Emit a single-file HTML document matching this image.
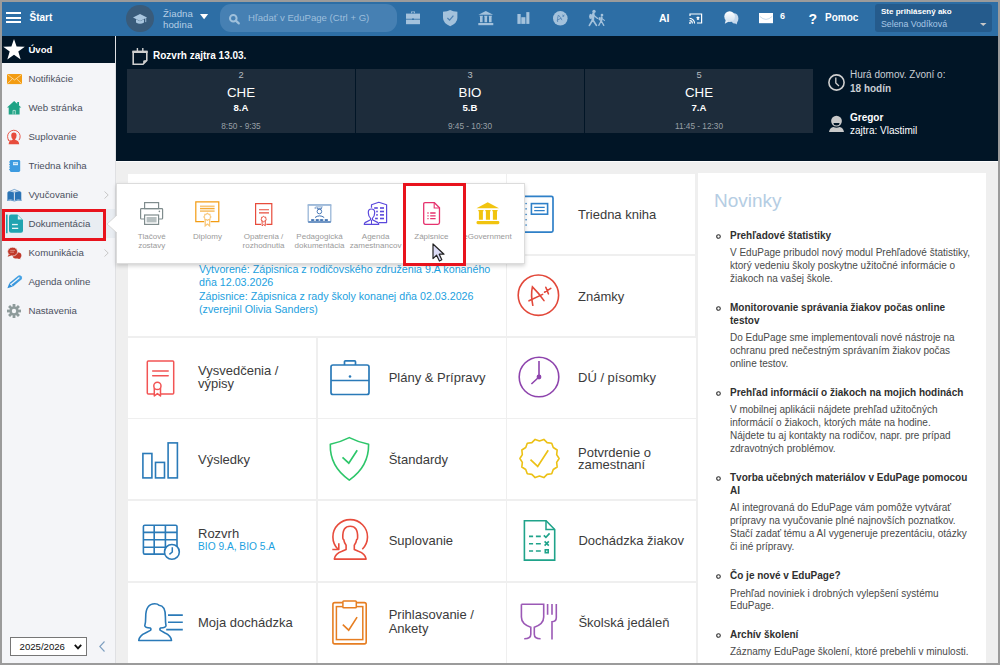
<!DOCTYPE html>
<html><head><meta charset="utf-8">
<style>
*{margin:0;padding:0;box-sizing:border-box}
html,body{width:1000px;height:665px;overflow:hidden;background:#9b9b9b;font-family:"Liberation Sans",sans-serif}
.a{position:absolute}
.t{position:absolute;line-height:1;white-space:nowrap}
svg{overflow:visible}
</style></head><body>
<div class="a" style="left:0px;top:0px;width:1000px;height:665px;background:#9b9b9b;"></div>
<div class="a" style="left:2px;top:2px;width:996px;height:34px;background:#2d6ea5;"></div>
<div class="a" style="left:6px;top:12px;width:15px;height:2px;background:#fff;"></div>
<div class="a" style="left:6px;top:16.5px;width:15px;height:2px;background:#fff;"></div>
<div class="a" style="left:6px;top:21px;width:15px;height:2px;background:#fff;"></div>
<div class="t" style="left:29.5px;top:12.54px;font-size:10px;color:#fff;font-weight:bold;">Štart</div>
<div class="a" style="left:126.2px;top:4.8px;width:27.6px;height:27.6px;background:#395b7a;border-radius:50%"></div>
<svg class="a" style="left:133.4px;top:13.8px;" width="14" height="11" viewBox="0 0 14 11"><path d="M7 0 L14 3.5 L7 7 L0 3.5Z" fill="#a9c6df"/><path d="M3 5.2 V8.5 Q7 11 11 8.5 V5.2 L7 7.3Z" fill="#a9c6df"/><rect x="12.3" y="3.6" width="0.9" height="4.5" fill="#a9c6df"/></svg>
<div class="t" style="left:163px;top:9.07px;font-size:9.6px;color:#b6cfe6;letter-spacing:0.1px;">Žiadna</div>
<div class="t" style="left:163px;top:20.07px;font-size:9.6px;color:#b6cfe6;letter-spacing:0.1px;">hodina</div>
<svg class="a" style="left:199.7px;top:14px;" width="8.2" height="5.2" viewBox="0 0 8.2 5.2"><path d="M0 0H8.2L4.1 5.2Z" fill="#fff"/></svg>
<div class="a" style="left:220px;top:4px;width:177px;height:28px;background:#4680b3;border-radius:11px"></div>
<svg class="a" style="left:228.5px;top:14px;" width="11" height="10" viewBox="0 0 11 10"><circle cx="4.3" cy="4.3" r="3.3" fill="none" stroke="#9fc0dc" stroke-width="2"/><path d="M6.8 6.6 L9.8 9.4" stroke="#9fc0dc" stroke-width="2.2" stroke-linecap="round"/></svg>
<div class="t" style="left:248px;top:13.17px;font-size:9.6px;color:#9ebfdc;">Hľadať v EduPage (Ctrl + G)</div>
<svg class="a" style="left:406px;top:11.4px;" width="14" height="13.2" viewBox="0 0 14 13.2"><path d="M5 0.5H9V2.3H8.2V1.3H5.8V2.3H5Z" fill="#a4c2dc"/><rect x="0" y="2.6" width="14" height="5.2" fill="#a4c2dc"/><rect x="0" y="8.6" width="14" height="4.6" fill="#a4c2dc"/><circle cx="7" cy="8.2" r="0.9" fill="#2d6ea5"/></svg>
<svg class="a" style="left:443px;top:9.6px;" width="14.4" height="16.2" viewBox="0 0 14.4 16.2"><path d="M7.2 0 Q10 1.8 14.4 1.8 V8 Q14.4 13 7.2 16.2 Q0 13 0 8 V1.8 Q4.4 1.8 7.2 0Z" fill="#a4c2dc"/><path d="M4.4 8 L6.6 10.2 L10.4 5.6" fill="none" stroke="#4f82b2" stroke-width="1.2"/></svg>
<svg class="a" style="left:478px;top:10.6px;" width="15.6" height="14.4" viewBox="0 0 15.6 14.4"><g fill="#a4c2dc"><path d="M7.8 0 L15.2 3.8 H0.4Z"/><path d="M1.6 4.8H5V5.6H4.6V11.2H2V5.6H1.6Z"/><path d="M6.1 4.8H9.5V5.6H9.1V11.2H6.5V5.6H6.1Z"/><path d="M10.6 4.8H14V5.6H13.6V11.2H11V5.6H10.6Z"/><rect x="0.3" y="12" width="15" height="2.2"/></g></svg>
<svg class="a" style="left:516.6px;top:12px;" width="12.6" height="12" viewBox="0 0 12.6 12"><rect x="0.4" y="2" width="3.3" height="9.9" fill="#a4c2dc"/><rect x="4.3" y="5.2" width="4.1" height="6.7" fill="#a4c2dc"/><rect x="9.3" y="0.1" width="3.1" height="11.8" fill="#a4c2dc"/></svg>
<svg class="a" style="left:552.7px;top:10.7px;" width="14.6" height="14.6" viewBox="0 0 14.6 14.6"><circle cx="7.3" cy="7.3" r="7.3" fill="#a4c2dc"/><path d="M4.6 11 Q4.2 7 5.4 4 Q7.4 6 9 9.2 M3.8 9.2 L8.4 7.2" fill="none" stroke="#5686b4" stroke-width="0.9"/><path d="M9.2 5.4 L11.6 4 M9.8 3.6 L10.8 6" stroke="#5686b4" stroke-width="0.8"/></svg>
<svg class="a" style="left:585px;top:6px;" width="25" height="24" viewBox="0 0 25 24"><g stroke="#a4c2dc" stroke-linecap="round" fill="none"><path d="M8.4 7.8 L7.8 14" stroke-width="2.6"/><path d="M7.6 14 L4.4 19.4 M7.9 14 L11.4 19.4" stroke-width="1.7"/><path d="M9 9.4 L12.6 12.4" stroke-width="1.3"/><path d="M16.6 11.2 L16.2 15" stroke-width="2.1"/><path d="M16.1 15 L13.8 19.4 M16.3 15 L18.8 19.4" stroke-width="1.3"/><path d="M17 12.6 L19.4 14.4" stroke-width="1.1"/></g><circle cx="9" cy="5.4" r="1.7" fill="#a4c2dc"/><ellipse cx="5.7" cy="10.4" rx="1.6" ry="2.6" fill="#a4c2dc"/><circle cx="17" cy="9" r="1.35" fill="#a4c2dc"/><ellipse cx="14.6" cy="12.8" rx="1.1" ry="1.8" fill="#a4c2dc"/></svg>
<div class="t" style="left:659px;top:13.11px;font-size:10.5px;color:#fff;font-weight:bold;">AI</div>
<svg class="a" style="left:689.4px;top:12.6px;" width="13.6" height="11" viewBox="0 0 13.6 11"><path d="M1 3 V1 H12.6 V10 H8" fill="none" stroke="#fff" stroke-width="1.2"/><path d="M0.6 5.4 A5 5 0 0 1 5.6 10.4 M0.6 7.6 A2.8 2.8 0 0 1 3.4 10.4" fill="none" stroke="#fff" stroke-width="1.1"/><circle cx="1" cy="10" r="0.9" fill="#fff"/><path d="M9 3.4 L11 4.4 L9 5.4 L7 4.4Z M7.8 5.2 V6.6 Q9 7.4 10.2 6.6 V5.2" fill="#fff"/></svg>
<svg class="a" style="left:723.8px;top:10.8px;" width="14.4" height="13.4" viewBox="0 0 14.4 13.4"><defs><linearGradient id="cg" x1="0" y1="0" x2="0" y2="1"><stop offset="0" stop-color="#fff"/><stop offset="1" stop-color="#cfe0ef"/></linearGradient></defs><ellipse cx="10.6" cy="7.4" rx="3.8" ry="5.2" fill="#c6d9ec"/><path d="M10.4 11.6 L12.6 13.6 L13.4 10.6Z" fill="#c6d9ec"/><ellipse cx="5.6" cy="5.6" rx="5.3" ry="5.4" fill="url(#cg)"/><path d="M1.8 9 L0.8 12.8 L4.8 10.6Z" fill="#e6eef6"/></svg>
<svg class="a" style="left:759px;top:12.6px;" width="14" height="10.2" viewBox="0 0 14 10.2"><rect x="0" y="0" width="14" height="10.2" fill="#fff"/><path d="M0.8 3.4 Q7 9.4 13.2 3.4" fill="none" stroke="#bcd3e6" stroke-width="0.8"/></svg>
<div class="t" style="left:780px;top:12.18px;font-size:9px;color:#fff;font-weight:bold;">6</div>
<div class="t" style="left:808.6px;top:11.55px;font-size:14px;color:#fff;font-weight:bold;">?</div>
<div class="t" style="left:825px;top:12.93px;font-size:10px;color:#fff;font-weight:bold;">Pomoc</div>
<div class="a" style="left:875px;top:4px;width:117px;height:28px;background:#255b8c;border-radius:3px"></div>
<div class="t" style="left:881px;top:8.23px;font-size:8px;color:#fff;font-weight:bold;">Ste prihlásený ako</div>
<div class="t" style="left:881px;top:20.05px;font-size:8.8px;color:#a9c7e6;">Selena Vodíková</div>
<svg class="a" style="left:980px;top:23px;" width="6.5" height="3" viewBox="0 0 6.5 3"><path d="M0 0H6.5L3.25 3Z" fill="#c8c8c8"/></svg>
<div class="a" style="left:2px;top:36px;width:114px;height:627px;background:#f4f5f8;"></div>
<div class="a" style="left:115px;top:36px;width:1px;height:627px;background:#dfe0e3;"></div>
<div class="a" style="left:2px;top:36px;width:113px;height:26.5px;background:#011526;"></div>
<svg class="a" style="left:3px;top:38.5px;" width="22" height="21" viewBox="0 0 22 21"><path d="M11 0 L13.6 7.6 L21.8 7.7 L15.3 12.6 L17.7 20.6 L11 15.8 L4.3 20.6 L6.7 12.6 L0.2 7.7 L8.4 7.6Z" fill="#fff"/></svg>
<div class="t" style="left:28.4px;top:44.87px;font-size:9.6px;color:#fff;font-weight:bold;">Úvod</div>
<div class="t" style="left:28.4px;top:73.79px;font-size:9.7px;color:#4b505e;">Notifikácie</div>
<div class="t" style="left:28.4px;top:102.79px;font-size:9.7px;color:#4b505e;">Web stránka</div>
<div class="t" style="left:28.4px;top:131.79px;font-size:9.7px;color:#4b505e;">Suplovanie</div>
<div class="t" style="left:28.4px;top:160.79px;font-size:9.7px;color:#4b505e;">Triedna kniha</div>
<div class="t" style="left:28.4px;top:189.79px;font-size:9.7px;color:#4b505e;">Vyučovanie</div>
<div class="a" style="left:2px;top:209px;width:113px;height:29px;background:#e9edf2;"></div>
<div class="t" style="left:28.4px;top:218.79px;font-size:9.7px;color:#4b505e;">Dokumentácia</div>
<div class="t" style="left:28.4px;top:247.79px;font-size:9.7px;color:#4b505e;">Komunikácia</div>
<div class="t" style="left:28.4px;top:276.79px;font-size:9.7px;color:#4b505e;">Agenda online</div>
<div class="t" style="left:28.4px;top:305.79px;font-size:9.7px;color:#4b505e;">Nastavenia</div>
<svg class="a" style="left:104px;top:190.5px;" width="5" height="8" viewBox="0 0 5 8"><path d="M0.5 0.5 L4.2 4 L0.5 7.5" fill="none" stroke="#c8c8c8" stroke-width="1"/></svg>
<svg class="a" style="left:104px;top:248.5px;" width="5" height="8" viewBox="0 0 5 8"><path d="M0.5 0.5 L4.2 4 L0.5 7.5" fill="none" stroke="#c8c8c8" stroke-width="1"/></svg>
<svg class="a" style="left:7px;top:73.9px;" width="15" height="10.1" viewBox="0 0 15 10.1"><rect width="15" height="10.1" fill="#f39c12"/><path d="M0.3 0.4 L7.5 6 L14.7 0.4 M0.3 9.8 L5.4 4.8 M14.7 9.8 L9.6 4.8" fill="none" stroke="#fde3b8" stroke-width="0.8"/></svg>
<svg class="a" style="left:7.4px;top:101px;" width="14.3" height="13.5" viewBox="0 0 14.3 13.5"><path d="M7.15 0 L14.3 6.6 H12.6 V13.5 H1.7 V6.6 H0Z" fill="#1fa386"/><rect x="10.2" y="1" width="1.8" height="3.5" fill="#1fa386"/><path d="M6 13.5 V9.4 H8.3 V13.5" fill="none" stroke="#c8ebe0" stroke-width="0.8"/></svg>
<svg class="a" style="left:7.4px;top:129.6px;" width="14" height="14.4" viewBox="0 0 14 14.4"><path d="M2.2 10.8 A6.3 6.3 0 1 1 12 10.2" fill="none" stroke="#e74c3c" stroke-width="0.9"/><path d="M1 9.6 L2.2 11.2 L3.8 10.2" fill="none" stroke="#e74c3c" stroke-width="0.8"/><path d="M1.6 14.2 Q2 10.6 5.2 10 L5.8 9.2 Q4.2 7.8 4.2 5.4 Q4.2 2.4 6.9 2.4 Q9.6 2.4 9.6 5.4 Q9.6 7.8 8 9.2 L8.6 10 Q11.8 10.6 12.2 14.2Z" fill="#e74c3c"/></svg>
<svg class="a" style="left:8.8px;top:160px;" width="11.2" height="12" viewBox="0 0 11.2 12"><rect x="0.8" y="0" width="10.4" height="12" rx="1.4" fill="#3d9be0"/><rect x="4" y="2.2" width="5" height="3" fill="#dff0fb"/><rect x="4.6" y="3" width="3.8" height="0.5" fill="#3d9be0"/><path d="M0 2H1.6M0 4.5H1.6M0 7H1.6M0 9.5H1.6" stroke="#3d9be0" stroke-width="0.8"/></svg>
<svg class="a" style="left:7px;top:189px;" width="14.7" height="12" viewBox="0 0 14.7 12"><path d="M7.35 0.4 L13.6 3 L1.1 3Z" fill="none" stroke="#2a73b5" stroke-width="0.6"/><path d="M0.4 3.2 Q3.8 2.2 6.9 3.6 V11.4 Q3.8 10 0.4 11Z M7.8 3.6 Q10.9 2.2 14.3 3.2 V11 Q10.9 10 7.8 11.4Z" fill="#2a73b5"/><path d="M0 11.4 Q3.8 10.6 7.35 12 Q10.9 10.6 14.7 11.4" fill="none" stroke="#2a73b5" stroke-width="0.7"/></svg>
<svg class="a" style="left:6px;top:213px;" width="17" height="22" viewBox="0 0 17 22"><rect x="0" y="1.6" width="1.6" height="18.6" fill="#20a4b0"/><path d="M5 1.5 H11.4 L17 7.1 V17.8 Q17 19.8 15 19.8 H5 Q3 19.8 3 17.8 V3.5 Q3 1.5 5 1.5Z" fill="#20a4b0"/><path d="M11.8 2.4 V6.6 H16" fill="#e9f6f7"/><rect x="6" y="10.9" width="5.8" height="1.3" fill="#e9f6f7"/><rect x="6" y="14.7" width="6.2" height="1.3" fill="#e9f6f7"/></svg>
<svg class="a" style="left:7.4px;top:246.6px;" width="14.6" height="12.4" viewBox="0 0 14.6 12.4"><ellipse cx="10" cy="8.4" rx="4.4" ry="3.2" fill="#c0392b"/><path d="M12 10.8 L14.2 12.2 L10.6 11.4Z" fill="#c0392b"/><ellipse cx="5.6" cy="4.6" rx="5" ry="4.4" fill="#c0392b" stroke="#f4f5f8" stroke-width="0.7"/><path d="M1.8 7.4 L0.6 9.8 L4.4 8.6Z" fill="#c0392b"/><path d="M3.2 3.4H8M3.2 5.2H7" stroke="#e39a90" stroke-width="0.8"/></svg>
<svg class="a" style="left:6.8px;top:275px;" width="15.5" height="13.5" viewBox="0 0 15.5 13.5"><defs><linearGradient id="pg" x1="0" y1="1" x2="1" y2="0"><stop offset="0" stop-color="#2b8ad6"/><stop offset="1" stop-color="#4aa6e6"/></linearGradient></defs><path d="M0.4 13.2 L2.4 8 L10.8 1 Q12.6 -0.4 14.4 1.2 Q16 3 14.4 4.6 L6 11.4Z" fill="url(#pg)"/><path d="M3.6 9.8 L12.4 2.4" stroke="#f4f5f8" stroke-width="1.3"/><path d="M2.6 8.4 L5.6 11.2" stroke="#f4f5f8" stroke-width="0.8"/></svg>
<svg class="a" style="left:7.4px;top:304px;" width="14" height="14" viewBox="0 0 14 14"><g fill="#8e9b9b"><circle cx="7" cy="7" r="4.6"/><rect x="5.6" y="0" width="2.8" height="14"/><rect x="0" y="5.6" width="14" height="2.8"/><rect x="5.6" y="0" width="2.8" height="14" transform="rotate(45 7 7)"/><rect x="5.6" y="0" width="2.8" height="14" transform="rotate(-45 7 7)"/></g><circle cx="7" cy="7" r="2.2" fill="#f4f5f8"/></svg>
<div class="a" style="left:10px;top:637px;width:77px;height:19px;background:#fff;border:1px solid #767676;"></div>
<div class="t" style="left:19.6px;top:642.37px;font-size:9.6px;color:#111;">2025/2026</div>
<svg class="a" style="left:74px;top:643.5px;" width="8" height="6" viewBox="0 0 8 6"><path d="M0.8 0.8 L4 4.4 L7.2 0.8" fill="none" stroke="#111" stroke-width="1.8"/></svg>
<svg class="a" style="left:98.5px;top:641px;" width="6" height="11" viewBox="0 0 6 11"><path d="M5.5 0.5 L0.8 5.5 L5.5 10.5" fill="none" stroke="#7e9fc0" stroke-width="1.1"/></svg>
<div class="a" style="left:116px;top:36px;width:882px;height:125px;background:#011526;"></div>
<svg class="a" style="left:132px;top:48px;" width="16" height="17" viewBox="0 0 16 17"><path d="M1.2 3.6 H14.8 V12.4 L11 16.2 H1.2Z" fill="none" stroke="#cfcfcf" stroke-width="1.6"/><rect x="0.4" y="2.8" width="15.2" height="2.2" fill="#cfcfcf"/><path d="M15.2 12.2 L11.2 16.6 V13.4 Q11.2 12.2 12.4 12.2Z" fill="#cfcfcf"/><path d="M5.4 0 V3 M10.8 0 V3" stroke="#cfcfcf" stroke-width="1.4"/></svg>
<div class="t" style="left:153px;top:50.73px;font-size:10px;color:#fff;font-weight:bold;">Rozvrh zajtra 13.03.</div>
<div class="a" style="left:127px;top:69px;width:228px;height:64px;background:#1d2c3b;"></div>
<div class="t" style="left:91px;width:300px;text-align:center;top:71.13px;font-size:9.3px;color:#b8bcc0;">2</div>
<div class="t" style="left:91px;width:300px;text-align:center;top:85.94px;font-size:13.3px;color:#fff;">CHE</div>
<div class="t" style="left:91px;width:300px;text-align:center;top:102.57px;font-size:9.6px;color:#fff;font-weight:bold;">8.A</div>
<div class="t" style="left:91px;width:300px;text-align:center;top:122.52px;font-size:8.25px;color:#9aa0a6;">8:50 - 9:35</div>
<div class="a" style="left:356px;top:69px;width:228px;height:64px;background:#1d2c3b;"></div>
<div class="t" style="left:320px;width:300px;text-align:center;top:71.13px;font-size:9.3px;color:#b8bcc0;">3</div>
<div class="t" style="left:320px;width:300px;text-align:center;top:85.94px;font-size:13.3px;color:#fff;">BIO</div>
<div class="t" style="left:320px;width:300px;text-align:center;top:102.57px;font-size:9.6px;color:#fff;font-weight:bold;">5.B</div>
<div class="t" style="left:320px;width:300px;text-align:center;top:122.52px;font-size:8.25px;color:#9aa0a6;">9:45 - 10:30</div>
<div class="a" style="left:585px;top:69px;width:228px;height:64px;background:#1d2c3b;"></div>
<div class="t" style="left:549px;width:300px;text-align:center;top:71.13px;font-size:9.3px;color:#b8bcc0;">5</div>
<div class="t" style="left:549px;width:300px;text-align:center;top:85.94px;font-size:13.3px;color:#fff;">CHE</div>
<div class="t" style="left:549px;width:300px;text-align:center;top:102.57px;font-size:9.6px;color:#fff;font-weight:bold;">7.A</div>
<div class="t" style="left:549px;width:300px;text-align:center;top:122.52px;font-size:8.25px;color:#9aa0a6;">11:45 - 12:30</div>
<svg class="a" style="left:828px;top:74px;" width="17" height="17" viewBox="0 0 17 17"><circle cx="8.5" cy="8.5" r="7.6" fill="none" stroke="#cfcfcf" stroke-width="1.6"/><path d="M7.8 3.6 V9 L11 12" fill="none" stroke="#cfcfcf" stroke-width="1.3"/></svg>
<div class="t" style="left:850px;top:70.13px;font-size:10px;color:#c9ced4;">Hurá domov. Zvoní o:</div>
<div class="t" style="left:850px;top:84.13px;font-size:10px;color:#c9ced4;font-weight:bold;">18 hodín</div>
<svg class="a" style="left:829px;top:115px;" width="16" height="17" viewBox="0 0 16 17"><circle cx="7.5" cy="6.1" r="5.4" fill="#c9c9c9"/><path d="M4.5 8 H10.5 Q10.5 10.5 7.5 10.5 Q4.5 10.5 4.5 8Z" fill="#011526"/><path d="M0 16.9 Q0.8 12.6 4.4 12.1 Q7.5 13.2 10.6 12.1 Q14.2 12.6 15 16.9Z" fill="#c9c9c9"/></svg>
<div class="t" style="left:850px;top:113.03px;font-size:10px;color:#fff;font-weight:bold;">Gregor</div>
<div class="t" style="left:850px;top:125.63px;font-size:10px;color:#fff;">zajtra: Vlastimil</div>
<div class="a" style="left:116px;top:161px;width:882px;height:502px;background:#efefef;"></div>
<div class="a" style="left:116px;top:161px;width:882px;height:1px;background:#fbfbfb;"></div>
<div class="a" style="left:128px;top:174px;width:377.5px;height:161.8px;background:#fff;"></div>
<div class="a" style="left:507px;top:174px;width:188px;height:80px;background:#fff;"></div>
<div class="a" style="left:507px;top:255.8px;width:188px;height:80px;background:#fff;"></div>
<div class="a" style="left:128px;top:337.6px;width:188px;height:80px;background:#fff;"></div>
<div class="a" style="left:317.5px;top:337.6px;width:188.5px;height:80px;background:#fff;"></div>
<div class="a" style="left:507px;top:337.6px;width:188.5px;height:80px;background:#fff;"></div>
<div class="a" style="left:128px;top:419.4px;width:188px;height:80px;background:#fff;"></div>
<div class="a" style="left:317.5px;top:419.4px;width:188.5px;height:80px;background:#fff;"></div>
<div class="a" style="left:507px;top:419.4px;width:188.5px;height:80px;background:#fff;"></div>
<div class="a" style="left:128px;top:501.2px;width:188px;height:80px;background:#fff;"></div>
<div class="a" style="left:317.5px;top:501.2px;width:188.5px;height:80px;background:#fff;"></div>
<div class="a" style="left:507px;top:501.2px;width:188.5px;height:80px;background:#fff;"></div>
<div class="a" style="left:128px;top:583px;width:188px;height:80px;background:#fff;"></div>
<div class="a" style="left:317.5px;top:583px;width:188.5px;height:80px;background:#fff;"></div>
<div class="a" style="left:507px;top:583px;width:188.5px;height:80px;background:#fff;"></div>
<div class="a" style="left:698px;top:173px;width:288px;height:490px;background:#fff;"></div>
<div class="t" style="left:199px;top:263.74px;font-size:10.7px;color:#1b9fe0;">Vytvorené: Zápisnica z rodičovského združenia 9.A konaného</div>
<div class="t" style="left:199px;top:276.94px;font-size:10.7px;color:#1b9fe0;">dňa 12.03.2026</div>
<div class="t" style="left:199px;top:290.94px;font-size:10.7px;color:#1b9fe0;">Zápisnice: Zápisnica z rady školy konanej dňa 02.03.2026</div>
<div class="t" style="left:199px;top:303.74px;font-size:10.7px;color:#1b9fe0;">(zverejnil Olivia Sanders)</div>
<svg class="a" style="left:515px;top:190px;" width="45" height="50" viewBox="0 0 45 50"><rect x="5" y="6.4" width="33" height="35.7" rx="1.6" fill="none" stroke="#2f80c8" stroke-width="1.7"/><rect x="16.4" y="13.6" width="16.2" height="10.6" fill="none" stroke="#2f80c8" stroke-width="1.6"/><path d="M19.2 17.3H29.7M19.2 20.7H29.7" stroke="#2f80c8" stroke-width="1.3"/><g fill="#2f80c8"><rect x="10.4" y="12.9" width="1.4" height="1.3"/><rect x="10.4" y="18.2" width="1.4" height="1.3"/><rect x="10.4" y="23.8" width="1.4" height="1.3"/><rect x="10.4" y="29.1" width="1.4" height="1.3"/><rect x="10.4" y="34.4" width="1.4" height="1.3"/></g></svg>
<div class="t" style="left:578px;top:208.00px;font-size:13px;color:#3b3b3b;">Triedna kniha</div>
<svg class="a" style="left:514px;top:270px;" width="50" height="50" viewBox="0 0 50 50"><circle cx="24.4" cy="25.2" r="20.2" fill="none" stroke="#e2483a" stroke-width="1.6"/><g fill="none" stroke="#e2483a" stroke-width="1.6" stroke-linecap="round"><path d="M18.8 35.3 Q16.6 25 18.4 16.9 Q24.6 23 30 30.6"/><path d="M15 30.8 L28.6 24.4"/><path d="M30.5 22.2 L36.8 18.4 M31.8 17.3 L34.4 23.8"/></g></svg>
<div class="t" style="left:578px;top:289.50px;font-size:13px;color:#3b3b3b;">Známky</div>
<svg class="a" style="left:145.5px;top:359.5px;" width="28" height="37" viewBox="0 0 28 37"><path d="M8 34.1 H2.3 Q1.3 34.1 1.3 33.1 V1.9 Q1.3 0.9 2.3 0.9 H26.7 Q27.7 0.9 27.7 1.9 V33.1 Q27.7 34.1 26.7 34.1 H15" fill="none" stroke="#f25454" stroke-width="1.5"/><path d="M6.7 11.1H22.2M6.7 15.8H22.2" stroke="#f25454" stroke-width="1.5" stroke-linecap="round"/><circle cx="11.4" cy="25.9" r="3.6" fill="none" stroke="#f25454" stroke-width="1.5"/><path d="M8.3 28 V36 L11.4 33.6 L14.5 36 V28" fill="none" stroke="#f25454" stroke-width="1.5" stroke-linejoin="round"/></svg>
<div class="t" style="left:198px;top:364.30px;font-size:13px;color:#3b3b3b;">Vysvedčenia /</div>
<div class="t" style="left:198px;top:376.60px;font-size:13px;color:#3b3b3b;">výpisy</div>
<svg class="a" style="left:329.5px;top:359.5px;" width="40" height="35.5" viewBox="0 0 40 35.5"><rect x="1" y="5" width="38" height="29.5" rx="2" fill="none" stroke="#2a7ab8" stroke-width="1.7"/><path d="M1 20.5H39" stroke="#2a7ab8" stroke-width="1.7"/><path d="M14.5 5V1.8 Q14.5 0.9 15.4 0.9 H24.6 Q25.5 0.9 25.5 1.8 V5" fill="none" stroke="#2a7ab8" stroke-width="1.7"/><circle cx="20" cy="16.5" r="1.3" fill="#2a7ab8"/></svg>
<div class="t" style="left:388.7px;top:370.50px;font-size:13px;color:#3b3b3b;">Plány &amp; Prípravy</div>
<svg class="a" style="left:518.2px;top:356.2px;" width="42" height="42" viewBox="0 0 42 42"><circle cx="21" cy="21" r="19.8" fill="none" stroke="#8e44ad" stroke-width="1.6"/><path d="M21 5 V21 L13.4 28" fill="none" stroke="#8e44ad" stroke-width="1.6"/><circle cx="21" cy="21" r="2.4" fill="#8e44ad"/></svg>
<div class="t" style="left:578px;top:371.00px;font-size:13px;color:#3b3b3b;">DÚ / písomky</div>
<svg class="a" style="left:136px;top:432px;" width="50" height="54" viewBox="0 0 50 54"><g fill="none" stroke="#2a7ab8" stroke-width="1.6"><rect x="6.9" y="21.5" width="9" height="24.4"/><rect x="19.5" y="30.4" width="9" height="15.5"/><rect x="32.1" y="10.9" width="9.3" height="35"/></g></svg>
<div class="t" style="left:198px;top:453.30px;font-size:13px;color:#3b3b3b;">Výsledky</div>
<svg class="a" style="left:324px;top:430px;" width="52" height="56" viewBox="0 0 52 56"><path d="M6.3 14.3 Q17 11.8 25.3 7.6 Q33.6 11.8 44.6 14.3 C44.8 30 37 42 25.3 50.1 C13.6 42 5.8 30 6.3 14.3Z" fill="none" stroke="#2dc66a" stroke-width="1.6" stroke-linejoin="round"/><path d="M18.5 27.4 L24.8 33.2 L33.2 20.2" fill="none" stroke="#2dc66a" stroke-width="1.7"/></svg>
<div class="t" style="left:388.7px;top:453.30px;font-size:13px;color:#3b3b3b;">Štandardy</div>
<svg class="a" style="left:519px;top:439.3px;" width="41" height="39.5" viewBox="0 0 41 39.5"><path d="M20.50,1.90 24.86,0.39 28.14,3.64 32.72,4.18 34.26,8.53 38.16,11.00 37.66,15.58 40.10,19.50 37.66,23.42 38.16,28.00 34.26,30.47 32.72,34.82 28.14,35.36 24.86,38.61 20.50,37.10 16.14,38.61 12.86,35.36 8.28,34.82 6.74,30.47 2.84,28.00 3.34,23.42 0.90,19.50 3.34,15.58 2.84,11.00 6.74,8.53 8.28,4.18 12.86,3.64 16.14,0.39 20.50,1.90Z" fill="none" stroke="#ecc115" stroke-width="1.6" stroke-linejoin="round"/><path d="M11.5 20.7 L18.7 27.4 L29.2 11.3" fill="none" stroke="#ecc115" stroke-width="1.7"/></svg>
<div class="t" style="left:578px;top:446.00px;font-size:13px;color:#3b3b3b;">Potvrdenie o</div>
<div class="t" style="left:578px;top:458.40px;font-size:13px;color:#3b3b3b;">zamestnaní</div>
<svg class="a" style="left:138px;top:518px;" width="48" height="48" viewBox="0 0 48 48"><g fill="none" stroke="#2a7ab8" stroke-width="1.6"><rect x="5.4" y="7.2" width="33.6" height="28.9" rx="1.4"/><path d="M5.4 14.4 H39 M5.4 21.7 H39 M5.4 29.2 H30 M16.2 7.2 V36.1 M27.4 7.2 V29"/></g><circle cx="33.9" cy="33.9" r="7.4" fill="#fff" stroke="#2a7ab8" stroke-width="1.6"/><path d="M34.3 29.2 V34 L31.4 36.3" fill="none" stroke="#2a7ab8" stroke-width="1.5"/></svg>
<div class="t" style="left:198px;top:527.40px;font-size:13px;color:#3b3b3b;">Rozvrh</div>
<div class="t" style="left:198px;top:542.07px;font-size:10.2px;color:#1b9fe0;">BIO 9.A, BIO 5.A</div>
<svg class="a" style="left:325px;top:512px;" width="50" height="54" viewBox="0 0 50 54"><g fill="none" stroke="#e74c3c" stroke-width="1.6" stroke-linejoin="round"><path d="M37.3 37.3 A17.3 17.3 0 1 0 13 37.2"/><path d="M13.8 31.3 V37.5 H7.3"/><path d="M9.3 47.1 Q10 41.6 17 39.2 L21.1 37.4 V33.2 Q19.2 30.6 18.8 27.8 Q17.6 27.2 17.8 25.6 Q17.4 14.2 25.2 14.2 Q33 14.2 32.6 25.6 Q32.8 27.2 31.6 27.8 Q31.2 30.6 29.3 33.2 V37.4 L33.4 39.2 Q40.4 41.6 41.1 47.1 Z"/></g></svg>
<div class="t" style="left:388.7px;top:534.30px;font-size:13px;color:#3b3b3b;">Suplovanie</div>
<svg class="a" style="left:516px;top:512px;" width="46" height="54" viewBox="0 0 46 54"><path d="M8.4 8.8 H30.1 L38.7 17.5 V48.1 H8.4Z" fill="none" stroke="#1fa38a" stroke-width="1.6"/><path d="M30 8.8 V17.4 H38.7" fill="none" stroke="#1fa38a" stroke-width="1.5"/><path d="M13 24.4H17.1M19.9 24.4H24.8 M13 31.7H17.1M19.9 31.7H24.8 M13 39H17.1M19.9 39H24.8" stroke="#1fa38a" stroke-width="1.6"/><path d="M27.8 23.4 L29.9 25.4 L33.6 21.4" fill="none" stroke="#1fa38a" stroke-width="1.6"/><path d="M28.6 29.4 L32.8 33.6 M32.8 29.4 L28.6 33.6" stroke="#1fa38a" stroke-width="1.6"/><rect x="29.3" y="37.8" width="2.9" height="2.9" fill="none" stroke="#1fa38a" stroke-width="1.6"/></svg>
<div class="t" style="left:578.4px;top:534.30px;font-size:13px;color:#3b3b3b;">Dochádzka žiakov</div>
<svg class="a" style="left:134px;top:596px;" width="54" height="52" viewBox="0 0 54 52"><path d="M4.7 44.5 Q5.4 39.6 11.4 37 L16.4 34.4 Q17.6 32.8 16.2 32 Q11.2 31.6 10.8 29.8 Q11.7 27 11.7 21 Q11.6 7.8 20.8 7.8 Q23.8 7.8 25 9.2 Q31.6 9.6 31.4 21 Q31.4 27 32 29.8 Q31.6 31.6 26.6 32 Q25.2 32.8 26.4 34.4 L31 37 Q37 39.6 37.5 44.5 Z" fill="none" stroke="#2a7ab8" stroke-width="1.6" stroke-linejoin="round"/><path d="M34 19.1 H48.8 M34 26.2 H48.8 M32.2 33.6 H48.8" stroke="#2a7ab8" stroke-width="1.6"/></svg>
<div class="t" style="left:198px;top:616.30px;font-size:13px;color:#3b3b3b;">Moja dochádzka</div>
<svg class="a" style="left:326px;top:594px;" width="48" height="56" viewBox="0 0 48 56"><rect x="6.9" y="8.6" width="33.3" height="41.3" rx="1.8" fill="none" stroke="#e67e22" stroke-width="1.6"/><rect x="10.4" y="12.6" width="26.4" height="33" fill="none" stroke="#e67e22" stroke-width="1.5"/><rect x="16.9" y="6.9" width="13.4" height="6.8" rx="0.8" fill="#fff" stroke="#e67e22" stroke-width="1.5"/><path d="M16.8 30.7 L22.7 36.2 L31.1 23.1" fill="none" stroke="#e67e22" stroke-width="1.6"/></svg>
<div class="t" style="left:388.7px;top:608.00px;font-size:13px;color:#3b3b3b;">Prihlasovanie /</div>
<div class="t" style="left:388.7px;top:621.60px;font-size:13px;color:#3b3b3b;">Ankety</div>
<svg class="a" style="left:514px;top:596px;" width="50" height="52" viewBox="0 0 50 52"><g fill="none" stroke="#9b59b6" stroke-width="1.6"><path d="M7.4 8.2 H29.7 V21 Q29.7 28 20.3 31.3 V38.2 Q20.3 42.8 26.6 42.8 M7.4 8.2 V21 Q7.4 28 16.8 31.3 V38.2 Q16.8 42.8 10.2 42.8"/><path d="M33.6 8 V18.8 M38 8 V18.8 M42.3 8 V21.6 Q42.3 25.6 38 25.8 V43.4"/></g></svg>
<div class="t" style="left:578.4px;top:615.80px;font-size:13px;color:#3b3b3b;">Školská jedáleň</div>
<div class="t" style="left:714px;top:191.42px;font-size:19px;color:#b5cde3;">Novinky</div>
<svg class="a" style="left:715.5px;top:233.8px;" width="5" height="5" viewBox="0 0 5 5"><circle cx="2.5" cy="2.5" r="1.8" fill="none" stroke="#2f2f2f" stroke-width="1.1"/></svg>
<div class="t" style="left:730px;top:230.53px;font-size:10px;color:#2f2f2f;font-weight:bold;">Prehľadové štatistiky</div>
<div class="t" style="left:730px;top:247.93px;font-size:10px;color:#4a4a4a;">V EduPage pribudol nový modul Prehľadové štatistiky,</div>
<div class="t" style="left:730px;top:260.88px;font-size:10px;color:#4a4a4a;">ktorý vedeniu školy poskytne užitočné informácie o</div>
<div class="t" style="left:730px;top:273.83px;font-size:10px;color:#4a4a4a;">žiakoch na vašej škole.</div>
<svg class="a" style="left:715.5px;top:305.8px;" width="5" height="5" viewBox="0 0 5 5"><circle cx="2.5" cy="2.5" r="1.8" fill="none" stroke="#2f2f2f" stroke-width="1.1"/></svg>
<div class="t" style="left:730px;top:302.54px;font-size:10px;color:#2f2f2f;font-weight:bold;">Monitorovanie správania žiakov počas online</div>
<div class="t" style="left:730px;top:315.74px;font-size:10px;color:#2f2f2f;font-weight:bold;">testov</div>
<div class="t" style="left:730px;top:333.13px;font-size:10px;color:#4a4a4a;">Do EduPage sme implementovali nové nástroje na</div>
<div class="t" style="left:730px;top:346.08px;font-size:10px;color:#4a4a4a;">ochranu pred nečestným správaním žiakov počas</div>
<div class="t" style="left:730px;top:359.03px;font-size:10px;color:#4a4a4a;">online testov.</div>
<svg class="a" style="left:715.5px;top:390.8px;" width="5" height="5" viewBox="0 0 5 5"><circle cx="2.5" cy="2.5" r="1.8" fill="none" stroke="#2f2f2f" stroke-width="1.1"/></svg>
<div class="t" style="left:730px;top:387.54px;font-size:10px;color:#2f2f2f;font-weight:bold;">Prehľad informácií o žiakoch na mojich hodinách</div>
<div class="t" style="left:730px;top:404.94px;font-size:10px;color:#4a4a4a;">V mobilnej aplikácii nájdete prehľad užitočných</div>
<div class="t" style="left:730px;top:417.88px;font-size:10px;color:#4a4a4a;">informácií o žiakoch, ktorých máte na hodine.</div>
<div class="t" style="left:730px;top:430.83px;font-size:10px;color:#4a4a4a;">Nájdete tu aj kontakty na rodičov, napr. pre prípad</div>
<div class="t" style="left:730px;top:443.78px;font-size:10px;color:#4a4a4a;">zdravotných problémov.</div>
<svg class="a" style="left:715.5px;top:476.1px;" width="5" height="5" viewBox="0 0 5 5"><circle cx="2.5" cy="2.5" r="1.8" fill="none" stroke="#2f2f2f" stroke-width="1.1"/></svg>
<div class="t" style="left:730px;top:472.84px;font-size:10px;color:#2f2f2f;font-weight:bold;">Tvorba učebných materiálov v EduPage pomocou</div>
<div class="t" style="left:730px;top:486.04px;font-size:10px;color:#2f2f2f;font-weight:bold;">AI</div>
<div class="t" style="left:730px;top:503.44px;font-size:10px;color:#4a4a4a;">AI integrovaná do EduPage vám pomôže vytvárať</div>
<div class="t" style="left:730px;top:516.38px;font-size:10px;color:#4a4a4a;">prípravy na vyučovanie plné najnovších poznatkov.</div>
<div class="t" style="left:730px;top:529.34px;font-size:10px;color:#4a4a4a;">Stačí zadať tému a AI vygeneruje prezentáciu, otázky</div>
<div class="t" style="left:730px;top:542.29px;font-size:10px;color:#4a4a4a;">či iné prípravy.</div>
<svg class="a" style="left:715.5px;top:574.4px;" width="5" height="5" viewBox="0 0 5 5"><circle cx="2.5" cy="2.5" r="1.8" fill="none" stroke="#2f2f2f" stroke-width="1.1"/></svg>
<div class="t" style="left:730px;top:571.13px;font-size:10px;color:#2f2f2f;font-weight:bold;">Čo je nové v EduPage?</div>
<div class="t" style="left:730px;top:588.54px;font-size:10px;color:#4a4a4a;">Prehľad noviniek i drobných vylepšení systému</div>
<div class="t" style="left:730px;top:601.49px;font-size:10px;color:#4a4a4a;">EduPage.</div>
<svg class="a" style="left:715.5px;top:633.1999999999999px;" width="5" height="5" viewBox="0 0 5 5"><circle cx="2.5" cy="2.5" r="1.8" fill="none" stroke="#2f2f2f" stroke-width="1.1"/></svg>
<div class="t" style="left:730px;top:629.93px;font-size:10px;color:#2f2f2f;font-weight:bold;">Archív školení</div>
<div class="t" style="left:730px;top:647.34px;font-size:10px;color:#4a4a4a;">Záznamy EduPage školení, ktoré prebehli v minulosti.</div>
<div class="a" style="left:116px;top:183px;width:408.5px;height:81px;background:#fff;border:1px solid #dcdcdc;box-shadow:0 2px 4px rgba(0,0,0,0.18);"></div>
<svg class="a" style="left:106px;top:215px;" width="11" height="18" viewBox="0 0 11 18"><path d="M11 0 L1 9 L11 18Z" fill="#fff"/><path d="M11 0 L1 9 L11 18" fill="none" stroke="#d8d8d8" stroke-width="1"/></svg>
<div class="t" style="left:1.6999999999999886px;width:300px;text-align:center;top:232.53px;font-size:8px;color:#9a9a9a;">Tlačové</div>
<div class="t" style="left:1.6999999999999886px;width:300px;text-align:center;top:242.13px;font-size:8px;color:#9a9a9a;">zostavy</div>
<div class="t" style="left:57.5px;width:300px;text-align:center;top:232.53px;font-size:8px;color:#9a9a9a;">Diplomy</div>
<div class="t" style="left:113.5px;width:300px;text-align:center;top:232.53px;font-size:8px;color:#9a9a9a;">Opatrenia /</div>
<div class="t" style="left:113.5px;width:300px;text-align:center;top:242.13px;font-size:8px;color:#9a9a9a;">rozhodnutia</div>
<div class="t" style="left:169.5px;width:300px;text-align:center;top:232.53px;font-size:8px;color:#9a9a9a;">Pedagogická</div>
<div class="t" style="left:169.5px;width:300px;text-align:center;top:242.13px;font-size:8px;color:#9a9a9a;">dokumentácia</div>
<div class="t" style="left:225.60000000000002px;width:300px;text-align:center;top:232.53px;font-size:8px;color:#9a9a9a;">Agenda</div>
<div class="t" style="left:225.60000000000002px;width:300px;text-align:center;top:242.13px;font-size:8px;color:#9a9a9a;">zamestnancov</div>
<div class="t" style="left:281.4px;width:300px;text-align:center;top:232.53px;font-size:8px;color:#9a9a9a;">Zápisnice</div>
<div class="t" style="left:337.5px;width:300px;text-align:center;top:232.53px;font-size:8px;color:#9a9a9a;">eGovernment</div>
<svg class="a" style="left:140px;top:202px;" width="23.2" height="23" viewBox="0 0 23.2 23"><g fill="none" stroke="#7f8c8d" stroke-width="1.2"><rect x="4.6" y="0.6" width="14" height="6"/><path d="M4.6 17H1.4 Q0.6 17 0.6 16.2V7.4 Q0.6 6.6 1.4 6.6H21.8 Q22.6 6.6 22.6 7.4V16.2 Q22.6 17 21.8 17H18.6"/><rect x="4.6" y="13" width="14" height="9.4"/></g><rect x="6.6" y="15" width="10" height="5.4" fill="#b6bfc0"/><circle cx="19.4" cy="9.4" r="0.8" fill="#7f8c8d"/></svg>
<svg class="a" style="left:195.2px;top:201px;" width="24.6" height="26" viewBox="0 0 24.6 26"><path d="M9.2 20.6H0.8V0.8H23.8V20.6H15.6" fill="none" stroke="#f39c12" stroke-width="1.2"/><path d="M5 5.3H19.6M5 10.1H19.6" stroke="#f8c77a" stroke-width="1.8"/><path d="M5 7.7H19.6" stroke="#f39c12" stroke-width="1.1"/><path d="M16.00,15.90 15.08,17.01 14.95,18.45 13.51,18.58 12.40,19.50 11.29,18.58 9.85,18.45 9.72,17.01 8.80,15.90 9.72,14.79 9.85,13.35 11.29,13.22 12.40,12.30 13.51,13.22 14.95,13.35 15.08,14.79Z" fill="#fff" stroke="#f8c77a" stroke-width="1.1"/><path d="M10.2 19 V24.8 L12.4 23 L14.6 24.8 V19" fill="none" stroke="#f8c77a" stroke-width="1.3"/></svg>
<svg class="a" style="left:254.8px;top:202.6px;" width="17.4" height="24" viewBox="0 0 17.4 24"><path d="M6 21.4H0.6V0.6H16.8V21.4H11.4" fill="none" stroke="#e74c3c" stroke-width="1.2"/><path d="M4 6.8H14 M4 9.9H14" stroke="#e74c3c" stroke-width="1.1"/><path d="M11.50,16.10 10.73,16.94 10.68,18.08 9.54,18.13 8.70,18.90 7.86,18.13 6.72,18.08 6.67,16.94 5.90,16.10 6.67,15.26 6.72,14.12 7.86,14.07 8.70,13.30 9.54,14.07 10.68,14.12 10.73,15.26Z" fill="#fff" stroke="#e74c3c" stroke-width="1"/><path d="M7.1 18.2 V22.8 L8.7 21.5 L10.3 22.8 V18.2" fill="none" stroke="#e74c3c" stroke-width="1"/></svg>
<svg class="a" style="left:304px;top:200px;" width="32" height="28" viewBox="0 0 32 28"><rect x="4.2" y="4.8" width="22.6" height="17.2" rx="0.8" fill="none" stroke="#9ab7d8" stroke-width="1.3"/><path d="M4.2 22 H26.8" stroke="#3a6db0" stroke-width="1.1"/><rect x="3.6" y="4.2" width="23.8" height="1.5" fill="#9ab7d8"/><rect x="11.6" y="6.3" width="7.2" height="1.1" fill="#9ab7d8"/><path d="M13.2 7.4 V8.8 H17.4 V7.4" fill="none" stroke="#3a6db0" stroke-width="0.9"/><path d="M11.2 7.2 V8.8" stroke="#3a6db0" stroke-width="0.8"/><circle cx="15.4" cy="11.5" r="2.3" fill="none" stroke="#3a6db0" stroke-width="0.9"/><path d="M11 17.5 Q15.6 14.2 20.2 17.5" fill="none" stroke="#3a6db0" stroke-width="1"/><rect x="7.2" y="19.6" width="16.6" height="0.9" fill="#9ab7d8"/><g fill="#3a6db0"><rect x="7.2" y="19.2" width="2.7" height="1.7"/><rect x="12" y="19.2" width="2.7" height="1.7"/><rect x="16.2" y="19.2" width="2.7" height="1.7"/><rect x="21" y="19.2" width="2.8" height="1.7"/></g></svg>
<svg class="a" style="left:360px;top:198px;" width="32" height="30" viewBox="0 0 32 30"><path d="M11.5 9.8 V6.8 L18.8 4.3 L26.6 6.8 V24.6 H19" fill="none" stroke="#5a48dc" stroke-width="1.2" stroke-linejoin="round"/><g fill="#5a48dc"><rect x="14.2" y="9.2" width="3.6" height="1.6"/><rect x="20" y="9.2" width="4" height="1.6"/><rect x="16.2" y="12.7" width="1.6" height="1.6"/><rect x="20" y="12.7" width="4" height="1.6"/><rect x="16.2" y="16.1" width="1.6" height="1.6"/><rect x="20" y="16.1" width="4" height="1.6"/><rect x="15.1" y="19.7" width="2.7" height="1.6"/><rect x="20" y="19.7" width="4" height="1.6"/></g><path d="M11.4 11 Q8.2 11 8.3 14.8 Q8.4 18.6 10.6 20.4 V21.8 L5 24.6 Q4.3 25.2 4.3 26.4 H18.7 Q18.7 25.2 18 24.6 L12.4 21.8 V20.4 Q14.6 18.6 14.7 14.8 Q14.8 11 11.4 11Z" fill="#fff" stroke="#5a48dc" stroke-width="1.2" stroke-linejoin="round"/><path d="M11.5 22 V26.4" stroke="#5a48dc" stroke-width="1"/></svg>
<svg class="a" style="left:422.8px;top:201.6px;" width="17.2" height="23" viewBox="0 0 17.2 23"><path d="M2 0.7H11.4L16.5 5.8V20.6Q16.5 22.3 14.8 22.3H2.4Q0.7 22.3 0.7 20.6V2Q0.7 0.7 2 0.7Z" fill="none" stroke="#e6326e" stroke-width="1.3"/><path d="M11.2 1V6H16.2" fill="none" stroke="#e6326e" stroke-width="1.1"/><path d="M4.4 11H5.6M7.2 11H12.6M4.4 13.8H5.6M7.2 13.8H12.6M4.4 16.6H5.6M7.2 16.6H12.6" stroke="#e6326e" stroke-width="1.3"/></svg>
<svg class="a" style="left:475.6px;top:202px;" width="23.4" height="23" viewBox="0 0 23.4 23"><g fill="#f1c40f"><path d="M0.5 6.3 L11.7 0.2 L23 6.3Z"/><path d="M2.3 8.1H7.5V9.2H6.9V17.8H2.9V9.2H2.3Z"/><path d="M9.3 8.1H14.6V9.2H14V17.8H9.9V9.2H9.3Z"/><path d="M16.3 8.1H21.6V9.2H21V17.8H16.9V9.2H16.3Z"/><rect x="0.5" y="19.1" width="22.9" height="3.1" rx="1.4"/></g></svg>
<div class="a" style="left:2px;top:209px;width:104px;height:31.5px;background:transparent;border:3px solid #e8131d;"></div>
<div class="a" style="left:403px;top:182.7px;width:62.5px;height:83.6px;background:transparent;border:3px solid #e8131d;"></div>
<svg class="a" style="left:432px;top:242.9px;" width="13" height="19" viewBox="0 0 13 19"><path d="M1 1 V15.6 L4.6 12.2 L7.4 18 L9.8 16.8 L7.2 11.2 L12 11.2Z" fill="#dcdcf6" stroke="#222" stroke-width="1.2" stroke-linejoin="round"/></svg>
</body></html>
